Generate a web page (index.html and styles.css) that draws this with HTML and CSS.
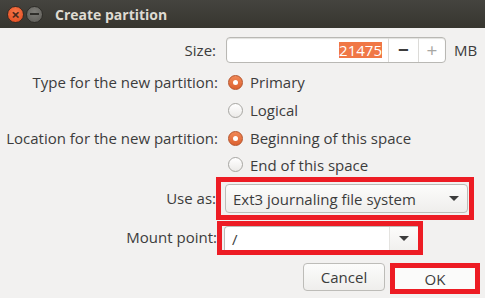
FILE: index.html
```html
<!doctype html>
<html lang="en">
    <head>
        <link rel="stylesheet" href="styles.css">
    </head>
    <body>
        <div class="window">
            <header class="titlebar">
                <span class="wm-btn wm-close">&times;</span>
                <span class="wm-btn wm-min"></span>
                <span class="title">Create partition</span>
            </header>

            <form class="dialog">
                <label class="lbl lbl-size">Size:</label>
                <div class="size-row">
                    <div class="spin">
                        <span class="spin-entry"><span class="sel">21475</span></span>
                        <span class="spin-btn spin-minus">&minus;</span>
                        <span class="spin-btn spin-plus">+</span>
                    </div>
                    <span class="unit">MB</span>
                </div>

                <label class="lbl">Type for the new partition:</label>
                <div class="radio"><span class="dot on"></span>Primary</div>
                <span></span>
                <div class="radio"><span class="dot"></span>Logical</div>

                <label class="lbl">Location for the new partition:</label>
                <div class="radio"><span class="dot on"></span>Beginning of this space</div>
                <span></span>
                <div class="radio"><span class="dot"></span>End of this space</div>

                <label class="lbl lbl-use">Use as:</label>
                <div class="mark mark-use">
                    <div class="combo">
                        <span>Ext3 journaling file system</span>
                        <span class="arrow"></span>
                    </div>
                </div>

                <label class="lbl lbl-mount">Mount point:</label>
                <div class="mark mark-mount">
                    <div class="mount">
                        <span class="mount-entry">/</span>
                        <span class="mount-btn"><span class="arrow"></span></span>
                    </div>
                </div>
            </form>

            <footer class="actions">
                <button type="button" class="btn">Cancel</button>
                <div class="mark mark-ok">
                    <button type="button" class="btn btn-ok">OK</button>
                </div>
            </footer>
        </div>
    </body>
</html>
```

FILE: styles.css
```css
body {
    margin: 0;
    background: #f2f1f0;
    font-family: 'Open Sans', 'Noto Sans', 'DejaVu Sans', sans-serif;
    font-size: 15px;
    color: #3c3c3c;
}
.window {
    width: 485px;
    height: 298px;
    overflow: hidden;
}

.titlebar {
    height: 28px;
    display: flex;
    align-items: center;
    padding-left: 7px;
    gap: 2px;
    background: linear-gradient(#45443f, #37362f);
}
.wm-btn {
    width: 17px;
    height: 17px;
    border-radius: 50%;
    box-sizing: border-box;
    display: flex;
    align-items: center;
    justify-content: center;
}
.wm-close {
    background: radial-gradient(circle at 50% 35%, #f7784a, #e2491d);
    border: 1px solid #3a2a22;
    color: #4a2a1c;
    font-size: 15px;
    line-height: 1;
    font-weight: bold;
}
.wm-min {
    background: radial-gradient(circle at 50% 35%, #7e7d78, #5c5b56);
    border: 1px solid #2e2d29;
}
.wm-min::before {
    content: '';
    width: 9px;
    height: 2px;
    background: #2f2e2a;
}
.title {
    margin-left: 10px;
    color: #dfdbd2;
    font-weight: bold;
    font-size: 14px;
}

.dialog {
    display: grid;
    grid-template-columns: 218px 1fr;
    grid-template-rows: 31px 28px 28px 28px 25px 43px 35px;
    align-items: center;
    padding-top: 9px;
}
.lbl {
    text-align: right;
    white-space: nowrap;
}
.lbl-size {
    align-self: start;
    line-height: 26px;
    padding-right: 2px;
}
.lbl-use {
    align-self: start;
    line-height: 43px;
    padding-right: 2px;
}
.lbl-mount {
    align-self: start;
    line-height: 35px;
    padding-right: 1px;
}

.size-row {
    align-self: start;
    display: flex;
    align-items: center;
    margin-left: 8px;
}
.spin {
    display: flex;
    width: 220px;
    height: 26px;
    box-sizing: border-box;
    border: 1px solid #b9b8b4;
    border-radius: 4px;
    background: #fff;
    box-shadow: inset 0 1px 1px #e2e1de;
    overflow: hidden;
}
.spin-entry {
    flex: 1;
    display: flex;
    align-items: center;
    justify-content: flex-end;
    padding-right: 6px;
}
.sel {
    background: #f07746;
    color: #fff;
    line-height: 16px;
}
.spin-btn {
    width: 29px;
    display: flex;
    align-items: center;
    justify-content: center;
    border-left: 1px solid #dcdbd8;
    font-size: 19px;
}
.spin-minus {
    color: #3c3c3c;
    font-weight: bold;
}
.spin-plus {
    width: 26px;
    color: #a8a7a3;
}
.unit {
    margin-left: 8px;
}

.radio {
    display: flex;
    align-items: center;
    margin-left: 10px;
    gap: 7px;
}
.dot {
    width: 15px;
    height: 15px;
    border-radius: 50%;
    box-sizing: border-box;
    border: 1px solid #a7a6a2;
    background: linear-gradient(#ffffff, #eceae8);
    display: flex;
    align-items: center;
    justify-content: center;
}
.dot.on {
    border-color: #b4532b;
    background: linear-gradient(#f08856, #dd6231);
}
.dot.on::before {
    content: '';
    width: 5px;
    height: 5px;
    border-radius: 50%;
    background: #fff;
}

.mark {
    border: 5px solid #ed1c24;
    box-sizing: border-box;
}
.mark-use {
    align-self: start;
    margin-left: -2px;
    width: 258px;
    height: 43px;
    padding: 2px 1px 0 4px;
}
.combo {
    height: 29px;
    box-sizing: border-box;
    border: 1px solid #bdbcb8;
    border-radius: 4px;
    background: linear-gradient(#fcfcfb, #efeeec);
    display: flex;
    align-items: center;
    justify-content: space-between;
    padding: 0 8px 0 7px;
}
.arrow {
    width: 0;
    height: 0;
    border-left: 5px solid transparent;
    border-right: 5px solid transparent;
    border-top: 5px solid #3c3c3c;
}
.mark-mount {
    align-self: start;
    margin-left: -1px;
    width: 206px;
    height: 34px;
    padding: 0 0 0 2px;
    margin-top: 1px;
}
.mount {
    height: 100%;
    box-sizing: border-box;
    border: 1px solid #bdbcb8;
    border-right: none;
    border-bottom: none;
    border-radius: 4px 0 0 0;
    background: #fff;
    display: flex;
}
.mount-entry {
    flex: 1;
    display: flex;
    align-items: center;
    padding-left: 7px;
}
.mount-btn {
    width: 28px;
    display: flex;
    align-items: center;
    justify-content: center;
    border-left: 1px solid #e4e3e0;
    background: linear-gradient(#fcfcfb, #f1f0ee);
}

.actions {
    display: flex;
    justify-content: flex-end;
    align-items: flex-start;
    gap: 5px;
    padding: 8px 5px 0 0;
}
.btn {
    font: inherit;
    color: #3c3c3c;
    height: 28px;
    width: 82px;
    box-sizing: border-box;
    border: 1px solid #bdbcb8;
    border-radius: 4px;
    background: linear-gradient(#fcfcfb, #efeeec);
    padding: 0;
}
.mark-ok {
    width: 90px;
    height: 31px;
}
.btn-ok {
    width: 100%;
    height: 100%;
    border: none;
    border-radius: 0;
    background: #fbfbfa;
}
```
